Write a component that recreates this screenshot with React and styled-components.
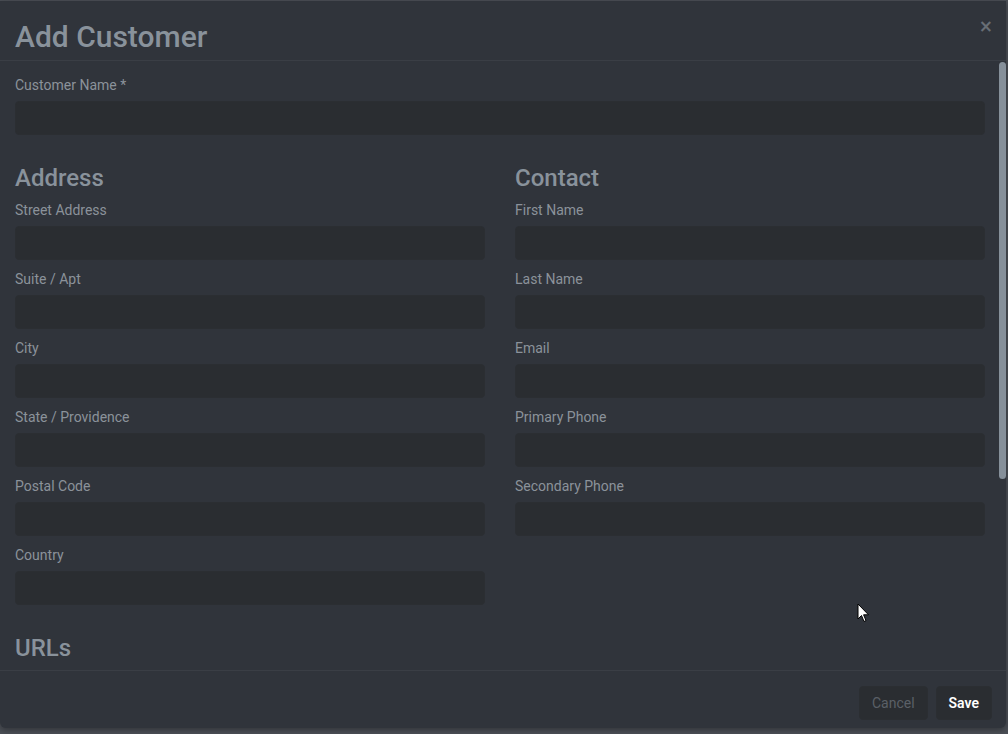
import React from 'react';
import styled, { createGlobalStyle } from 'styled-components';

const GlobalStyle = createGlobalStyle`
  html, body {
    margin: 0;
    padding: 0;
    background: #4b4f56;
    font-family: Roboto, "Liberation Sans", Arial, sans-serif;
  }
  * { box-sizing: border-box; }
`;

const Backdrop = styled.div`
  position: relative;
  height: 100vh;
  padding: 1px 2px 6px 0;
  background: #4b4f56;
  display: flex;
`;

const Modal = styled.div`
  flex: 1;
  display: flex;
  flex-direction: column;
  background: #30343b;
  border-radius: 0 0 6px 6px;
  overflow: hidden;
  box-shadow: 0 2px 6px rgba(0, 0, 0, 0.35);
`;

const Header = styled.div`
  display: flex;
  justify-content: space-between;
  align-items: flex-start;
  padding: 18px 15px 5px 15px;
  border-bottom: 1px solid #3a3e45;
  flex-shrink: 0;
`;

const Title = styled.h1`
  margin: 0;
  font-size: 30px;
  line-height: 36px;
  font-weight: 500;
  color: #89929b;
`;

const CloseButton = styled.button`
  background: none;
  border: none;
  padding: 0;
  margin: -3px -2px 0 0;
  color: #686e75;
  font-family: "DejaVu Sans", sans-serif;
  font-size: 17px;
  font-weight: 700;
  line-height: 20px;
  cursor: pointer;
`;

const BodyWrap = styled.div`
  position: relative;
  flex: 1;
  min-height: 0;
`;

const Body = styled.div`
  height: 100%;
  overflow: hidden;
  padding: 14px 21px 0 15px;
`;

const ScrollThumb = styled.div`
  position: absolute;
  top: 1px;
  right: 0;
  width: 7px;
  height: 417px;
  border-radius: 4px;
  background: #86909a;
`;

const Columns = styled.div`
  display: grid;
  grid-template-columns: 1fr 1fr;
  column-gap: 30px;
`;

const SectionTitle = styled.h2`
  margin: 20px 0 7px 0;
  font-size: 24px;
  line-height: 29px;
  font-weight: 500;
  color: #89929b;
`;

const Field = styled.div`
  margin-bottom: 9px;
`;

const Label = styled.label`
  display: block;
  font-size: 14px;
  line-height: 20px;
  margin-bottom: 6px;
  color: #8b929a;
`;

const Input = styled.input`
  display: block;
  width: 100%;
  height: 34px;
  padding: 6px 12px;
  background: #2a2d31;
  border: 1px solid #2b2e32;
  border-radius: 4px;
  color: #c8ccd0;
  font-family: inherit;
  font-size: 14px;
  outline: none;
`;

const Footer = styled.div`
  display: flex;
  justify-content: flex-end;
  gap: 8px;
  padding: 15px 14px 8px 15px;
  border-top: 1px solid #3a3e45;
  flex-shrink: 0;
`;

const Button = styled.button`
  height: 34px;
  padding: 0 12px;
  background: #2a2d31;
  border: 1px solid #2b2e32;
  border-radius: 4px;
  font-family: inherit;
  font-size: 14px;
  font-weight: ${p => (p.$primary ? 600 : 400)};
  color: ${p => (p.$primary ? '#ffffff' : '#5b6067')};
  cursor: pointer;
`;

const Cursor = styled.svg`
  position: absolute;
  left: 857px;
  top: 603px;
  pointer-events: none;
`;

const TextField = ({ label }) => (
  <Field>
    <Label>{label}</Label>
    <Input type="text" />
  </Field>
);

const addressFields = ['Street Address', 'Suite / Apt', 'City', 'State / Providence', 'Postal Code', 'Country'];
const contactFields = ['First Name', 'Last Name', 'Email', 'Primary Phone', 'Secondary Phone'];

const App = () => {
  return (
    <>
      <GlobalStyle />
      <Backdrop>
        <Modal>
          <Header>
            <Title>Add Customer</Title>
            <CloseButton>×</CloseButton>
          </Header>
          <BodyWrap>
            <Body>
              <TextField label="Customer Name *" />
              <Columns>
                <div>
                  <SectionTitle>Address</SectionTitle>
                  {addressFields.map(f => <TextField key={f} label={f} />)}
                </div>
                <div>
                  <SectionTitle>Contact</SectionTitle>
                  {contactFields.map(f => <TextField key={f} label={f} />)}
                </div>
              </Columns>
              <SectionTitle>URLs</SectionTitle>
            </Body>
            <ScrollThumb />
          </BodyWrap>
          <Footer>
            <Button>Cancel</Button>
            <Button $primary>Save</Button>
          </Footer>
        </Modal>
        <Cursor width="13" height="21" viewBox="0 0 13 21">
          <path d="M1 1 L1 16 L4.5 12.5 L7 18.5 L9 17.6 L6.6 11.8 L11.5 11.8 Z" fill="#ffffff" stroke="#000000" strokeWidth="1" strokeLinejoin="round" />
        </Cursor>
      </Backdrop>
    </>
  );
};

export default App;
